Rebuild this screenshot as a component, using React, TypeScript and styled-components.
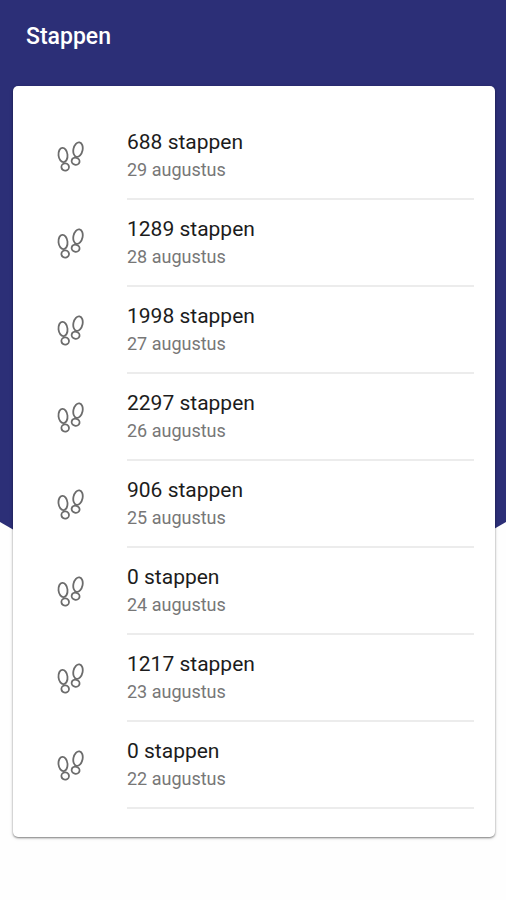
import React from "react";
import styled, { createGlobalStyle } from "styled-components";

const GlobalStyle = createGlobalStyle`
  *, *::before, *::after { box-sizing: border-box; }
  body {
    margin: 0;
    background: #fefefe;
    font-family: Roboto, "Liberation Sans", sans-serif;
  }
`;

const Page = styled.div`
  position: relative;
  isolation: isolate;
  min-height: 100vh;
  padding-bottom: 32px;

  &::before {
    content: "";
    position: absolute;
    z-index: -1;
    inset: 0 0 auto;
    height: 668px;
    background: #2c2f77;
    clip-path: polygon(0 0, 100% 0, 100% 522px, 50% 100%, 0 522px);
  }
`;

const Header = styled.header`
  display: flex;
  align-items: center;
  height: 74px;
  padding: 0 26px;
`;

const Title = styled.h1`
  margin: 0;
  color: #fff;
  font-size: 23px;
  font-weight: 500;
  line-height: 28px;
`;

const Card = styled.main`
  margin: 12px 11px 0 13px;
  padding: 27px 21px 28px 42px;
  border-radius: 5px;
  background: #fff;
  box-shadow: 0 1px 2px rgba(0, 0, 0, 0.45), 0 1px 4px rgba(0, 0, 0, 0.12);
`;

const StepList = styled.ul`
  margin: 0;
  padding: 0;
  list-style: none;
`;

const StepRow = styled.li`
  display: grid;
  grid-template-columns: 72px 1fr;
`;

const IconCell = styled.div`
  padding: 28px 0 0 1px;
`;

const FootIcon = styled.svg`
  display: block;
  width: 30px;
  height: 34px;
  fill: none;
  stroke: #6c6c6c;
  stroke-width: 1.8;
`;

const Details = styled.div`
  padding: 15px 0 14px;
  border-bottom: 2px solid #ececec;
`;

const Count = styled.div`
  color: #1c1c1c;
  font-size: 21px;
  line-height: 28px;
`;

const Day = styled.div`
  color: #777;
  font-size: 18px;
  line-height: 28px;
`;

function Footprints() {
  return (
    <FootIcon viewBox="0 0 30 34" aria-hidden="true">
      <ellipse cx="7" cy="14" rx="4.5" ry="7.2" transform="rotate(-6 7 14)" />
      <ellipse cx="9.2" cy="26" rx="3.8" ry="3.6" transform="rotate(-12 9.2 26)" />
      <ellipse cx="22" cy="8.6" rx="4.6" ry="7.4" transform="rotate(12 22 8.6)" />
      <ellipse cx="19.6" cy="20.2" rx="4" ry="3.5" transform="rotate(14 19.6 20.2)" />
    </FootIcon>
  );
}

const days = [
  { steps: 688, day: "29 augustus" },
  { steps: 1289, day: "28 augustus" },
  { steps: 1998, day: "27 augustus" },
  { steps: 2297, day: "26 augustus" },
  { steps: 906, day: "25 augustus" },
  { steps: 0, day: "24 augustus" },
  { steps: 1217, day: "23 augustus" },
  { steps: 0, day: "22 augustus" },
];

export default function App() {
  return (
    <Page>
      <GlobalStyle />
      <Header>
        <Title>Stappen</Title>
      </Header>
      <Card>
        <StepList>
          {days.map(({ steps, day }) => (
            <StepRow key={day}>
              <IconCell>
                <Footprints />
              </IconCell>
              <Details>
                <Count>{steps} stappen</Count>
                <Day>{day}</Day>
              </Details>
            </StepRow>
          ))}
        </StepList>
      </Card>
    </Page>
  );
}
